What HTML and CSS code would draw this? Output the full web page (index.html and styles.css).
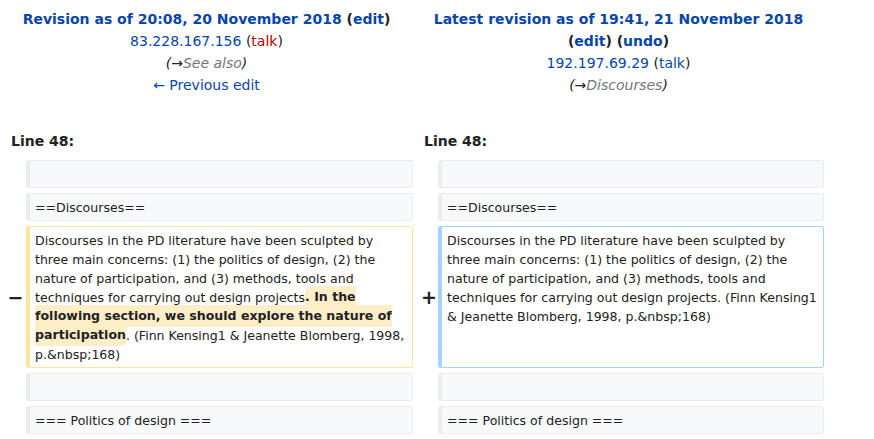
FILE: index.html
```html
<!DOCTYPE html>
<html>
<head>
<meta charset="utf-8">
<link rel="stylesheet" href="styles.css">
</head>
<body>
<div class="page">
  <div class="titles">
    <div class="title">
      <div><strong><a class="link">Revision as of 20:08, 20 November 2018</a> (<a class="link">edit</a>)</strong></div>
      <div><a class="link">83.228.167.156</a> (<a class="red">talk</a>)</div>
      <div class="comment">(→<span class="auto">See also</span>)</div>
      <div><a class="link">← Previous edit</a></div>
    </div>
    <div class="title">
      <div><strong><a class="link">Latest revision as of 19:41, 21 November 2018</a><br>(<a class="link">edit</a>) (<a class="link">undo</a>)</strong></div>
      <div><a class="link">192.197.69.29</a> (<a class="link">talk</a>)</div>
      <div class="comment">(→<span class="auto">Discourses</span>)</div>
    </div>
  </div>
  <div class="linenos">
    <div class="lineno">Line 48:</div>
    <div class="lineno">Line 48:</div>
  </div>
  <div class="diff">
    <div class="marker"></div>
    <div class="cell context"><br></div>
    <div class="marker right"></div>
    <div class="cell context"><br></div>

    <div class="marker"></div>
    <div class="cell context">==Discourses==</div>
    <div class="marker right"></div>
    <div class="cell context">==Discourses==</div>

    <div class="marker">−</div>
    <div class="cell deleted">Discourses in the PD literature have been sculpted by three main concerns: (1) the politics of design, (2) the nature of participation, and (3) methods, tools and techniques for carrying out design projects<del class="change">. In the following section, we should explore the nature of participation</del>. (Finn Kensing1 &amp; Jeanette Blomberg, 1998, p.&amp;nbsp;168)</div>
    <div class="marker right">+</div>
    <div class="cell added">Discourses in the PD literature have been sculpted by three main concerns: (1) the politics of design, (2) the nature of participation, and (3) methods, tools and techniques for carrying out design projects. (Finn Kensing1 &amp; Jeanette Blomberg, 1998, p.&amp;nbsp;168)</div>

    <div class="marker"></div>
    <div class="cell context"><br></div>
    <div class="marker right"></div>
    <div class="cell context"><br></div>

    <div class="marker"></div>
    <div class="cell context">=== Politics of design ===</div>
    <div class="marker right"></div>
    <div class="cell context">=== Politics of design ===</div>
  </div>
</div>
</body>
</html>
```
FILE: styles.css
```css
html, body {
  margin: 0;
  padding: 0;
  background: #fff;
}
body {
  font-family: "DejaVu Sans", sans-serif;
  font-size: 14px;
  line-height: 22px;
  color: #222;
}
.page {
  width: 874px;
}
.titles {
  display: grid;
  grid-template-columns: 413px 411px;
  padding-top: 8px;
}
.title {
  text-align: center;
}
.link {
  color: #0645ad;
  text-decoration: none;
}
.red {
  color: #ba0000;
  text-decoration: none;
}
.comment {
  font-style: italic;
  color: #222;
}
.auto {
  color: #72777d;
}
.linenos {
  display: grid;
  grid-template-columns: 413px 411px;
  margin-top: 34px;
}
.lineno {
  font-weight: bold;
  padding-left: 11px;
}
.diff {
  display: grid;
  grid-template-columns: 26px 387px 25px 386px;
  row-gap: 5px;
  margin-top: 8px;
}
.marker {
  display: flex;
  align-items: center;
  justify-content: center;
  padding-left: 5px;
  font-weight: bold;
  font-size: 19px;
}
.marker.right {
  padding-left: 7px;
}
.cell {
  font-size: 12.55px;
  line-height: 19px;
  min-height: 19px;
  border-style: solid;
  border-width: 1px 1px 1px 4px;
  border-radius: 3px;
  padding: 3.5px 3px 3.5px 5px;
  word-wrap: break-word;
}
.context {
  background: #f8f9fa;
  border-color: #eaecf0;
}
.deleted {
  background: #fff;
  border-color: #ffe49c;
}
.added {
  background: #fff;
  border-color: #a3d3ff;
}
.change {
  text-decoration: none;
  font-weight: bold;
  background: #feeec8;
  border-radius: 0.33em;
  padding: 0.25em 0;
}
```
